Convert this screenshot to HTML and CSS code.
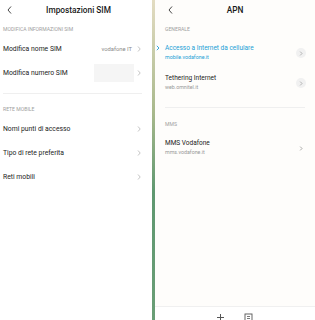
FILE: index.html
```html
<!DOCTYPE html>
<html>
<head>
    <title>Impostazioni SIM / APN</title>
    <meta charset="UTF-8">
    <link rel="stylesheet" href="styles.css">
</head>
<body>
    <div class="screens">
        <div class="panel panel-sim">
            <div class="header">
                <svg class="back" width="5" height="8" viewBox="0 0 5 8"><path d="M4 0.5L1 4l3 3.5" stroke="#333" stroke-width="0.9" fill="none"/></svg>
                <span class="title">Impostazioni SIM</span>
            </div>

            <div class="section-label">Modifica informazioni SIM</div>
            <div class="row">
                <span class="row-text">Modifica nome SIM</span>
                <span class="row-value">vodafone IT</span>
                <svg class="chev" width="4" height="6" viewBox="0 0 4 6"><path d="M1 0.5L3.2 3 1 5.5" stroke="#aaa" stroke-width="0.7" fill="none"/></svg>
            </div>
            <div class="row">
                <span class="row-text">Modifica numero SIM</span>
                <span class="blank-box"></span>
                <svg class="chev" width="4" height="6" viewBox="0 0 4 6"><path d="M1 0.5L3.2 3 1 5.5" stroke="#aaa" stroke-width="0.7" fill="none"/></svg>
            </div>

            <div class="sep sep-sim"></div>

            <div class="section-label label-rete">Rete mobile</div>
            <div class="row">
                <span class="row-text">Nomi punti di accesso</span>
                <svg class="chev" width="4" height="6" viewBox="0 0 4 6"><path d="M1 0.5L3.2 3 1 5.5" stroke="#aaa" stroke-width="0.7" fill="none"/></svg>
            </div>
            <div class="row">
                <span class="row-text">Tipo di rete preferita</span>
                <svg class="chev" width="4" height="6" viewBox="0 0 4 6"><path d="M1 0.5L3.2 3 1 5.5" stroke="#aaa" stroke-width="0.7" fill="none"/></svg>
            </div>
            <div class="row">
                <span class="row-text">Reti mobili</span>
                <svg class="chev" width="4" height="6" viewBox="0 0 4 6"><path d="M1 0.5L3.2 3 1 5.5" stroke="#aaa" stroke-width="0.7" fill="none"/></svg>
            </div>
        </div>

        <div class="divider"></div>

        <div class="panel panel-apn">
            <div class="header">
                <svg class="back" width="5" height="8" viewBox="0 0 5 8"><path d="M4 0.5L1 4l3 3.5" stroke="#333" stroke-width="0.9" fill="none"/></svg>
                <span class="title">APN</span>
            </div>

            <div class="section-label">Generale</div>
            <div class="apn-row active">
                <svg class="marker" width="4" height="6" viewBox="0 0 4 6"><path d="M0.8 0.8L3 3 0.8 5.2" stroke="#229fd6" stroke-width="0.9" fill="none"/></svg>
                <div class="apn-info">
                    <div class="apn-name">Accesso a Internet da cellulare</div>
                    <div class="apn-host">mobile.vodafone.it</div>
                </div>
                <span class="circle-chev"><svg width="4" height="5" viewBox="0 0 4 5"><path d="M1.2 0.6L3 2.5 1.2 4.4" stroke="#999" stroke-width="0.7" fill="none"/></svg></span>
            </div>
            <div class="apn-row">
                <div class="apn-info">
                    <div class="apn-name">Tethering Internet</div>
                    <div class="apn-host">web.omnitel.it</div>
                </div>
                <span class="circle-chev"><svg width="4" height="5" viewBox="0 0 4 5"><path d="M1.2 0.6L3 2.5 1.2 4.4" stroke="#999" stroke-width="0.7" fill="none"/></svg></span>
            </div>

            <div class="sep sep-apn"></div>

            <div class="section-label label-mms">MMS</div>
            <div class="apn-row">
                <div class="apn-info">
                    <div class="apn-name">MMS Vodafone</div>
                    <div class="apn-host">mms.vodafone.it</div>
                </div>
                <span class="circle-chev plain"><svg width="4" height="5" viewBox="0 0 4 5"><path d="M1.2 0.6L3 2.5 1.2 4.4" stroke="#888" stroke-width="0.7" fill="none"/></svg></span>
            </div>

            <div class="spacer"></div>

            <div class="toolbar">
                <svg class="tool-icon" width="9" height="9" viewBox="0 0 9 9">
                    <path d="M4.5 1v7M1 4.5h7" stroke="#555" stroke-width="1" fill="none"/>
                </svg>
                <svg class="tool-icon" width="9" height="9" viewBox="0 0 9 9">
                    <rect x="1" y="1" width="7" height="7" stroke="#555" stroke-width="0.9" fill="none"/>
                    <path d="M3 3.5h3M3 5.5h3" stroke="#555" stroke-width="0.8"/>
                </svg>
            </div>
        </div>
    </div>
</body>
</html>
```

FILE: styles.css
```css
* { margin: 0; padding: 0; box-sizing: border-box; }
html, body { width: 315px; height: 320px; overflow: hidden; }
body { font-family: Roboto, "Liberation Sans", sans-serif; background: #fff; color: #222; }
.screens { display: flex; height: 320px; }
.panel { display: flex; flex-direction: column; height: 320px; }
.panel-sim { width: 152px; background: #fff; padding: 0 10px 0 3px; }
.panel-apn { flex: 1; background: #fefdfb; }
.divider { width: 3px; background: linear-gradient(#e3dcc2, #a9b98c 35%, #5f9870 60%, #6a9e76); }

.header { height: 19px; display: flex; align-items: center; position: relative; }
.back { margin-left: 4px; }
.title { position: absolute; left: 0; right: 0; text-align: center; font-size: 8.3px; font-weight: 500; color: #1a1a1a; }
.panel-sim .title { left: 12px; }

.section-label { height: 16px; margin-top: 2px; display: flex; align-items: center; font-size: 5.1px; color: #a0a0a0; text-transform: uppercase; }
.label-rete { margin-top: 7px; }

.row { height: 24px; display: flex; align-items: center; }
.row-text { flex: 1; font-size: 6.8px; color: #222; }
.row-value { font-size: 5.8px; color: #8a8a8a; margin-right: 5px; }
.blank-box { width: 40px; height: 18px; background: #f5f5f5; margin-right: 3px; }
.chev { margin-right: 1px; }

.sep { height: 1px; background: #efefef; }
.sep-sim { margin-top: 8px; }

.panel-apn .header { padding-left: 9px; }
.panel-apn .section-label { padding-left: 10px; }
.apn-row { height: 30px; display: flex; align-items: center; padding: 0 9px 0 10px; position: relative; }
.apn-info { flex: 1; }
.apn-name { font-size: 6.5px; color: #222; line-height: 9px; }
.apn-host { font-size: 5.3px; color: #999; line-height: 8px; }
.active .apn-name, .active .apn-host { color: #229fd6; }
.marker { position: absolute; left: 1px; top: 8px; }
.circle-chev { width: 10px; height: 10px; border-radius: 50%; background: #f1f1f1; display: flex; align-items: center; justify-content: center; margin-top: 2px; }
.circle-chev.plain { background: none; }

.sep-apn { margin: 10px 10px 0 10px; }
.label-mms { margin-top: 8px; }

.spacer { flex: 1; }
.toolbar { height: 14px; border-top: 1px solid #f0f0f0; display: flex; align-items: flex-start; padding: 6px 0 0 61px; gap: 19px; background: #fff; }
```
